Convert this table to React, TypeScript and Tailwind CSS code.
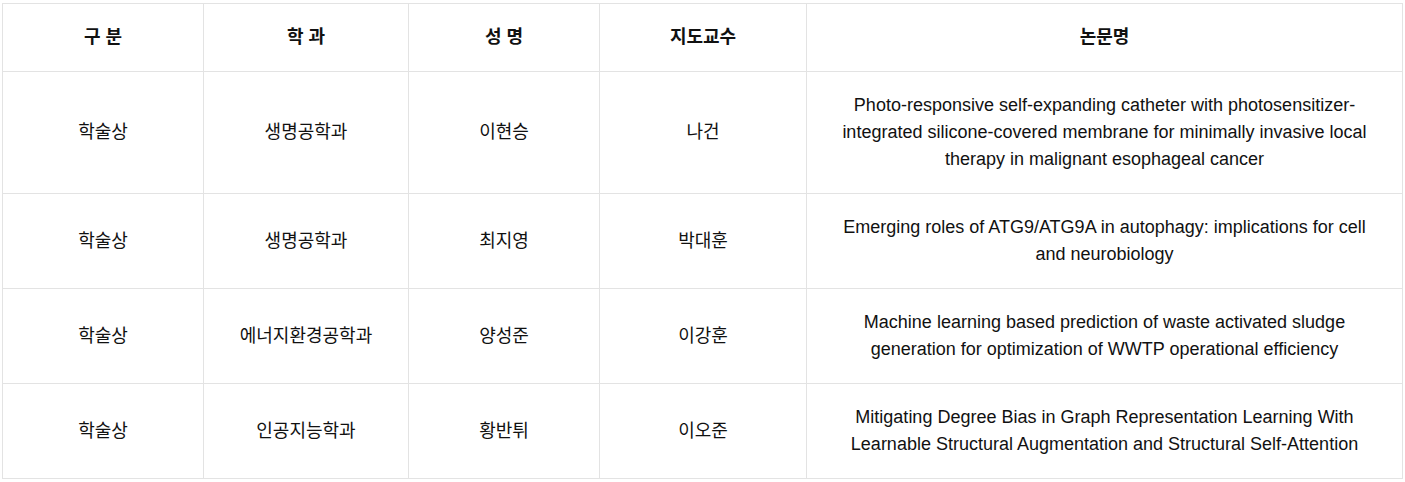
import React from 'react';

const rows = [
  {
    type: '학술상',
    dept: '생명공학과',
    name: '이현승',
    prof: '나건',
    title:
      'Photo-responsive self-expanding catheter with photosensitizer-integrated silicone-covered membrane for minimally invasive local therapy in malignant esophageal cancer',
  },
  {
    type: '학술상',
    dept: '생명공학과',
    name: '최지영',
    prof: '박대훈',
    title: 'Emerging roles of ATG9/ATG9A in autophagy: implications for cell and neurobiology',
  },
  {
    type: '학술상',
    dept: '에너지환경공학과',
    name: '양성준',
    prof: '이강훈',
    title:
      'Machine learning based prediction of waste activated sludge generation for optimization of WWTP operational efficiency',
  },
  {
    type: '학술상',
    dept: '인공지능학과',
    name: '황반튀',
    prof: '이오준',
    title:
      'Mitigating Degree Bias in Graph Representation Learning With Learnable Structural Augmentation and Structural Self-Attention',
  },
];

const headers = ['구 분', '학 과', '성 명', '지도교수', '논문명'];

export default function App() {
  return (
    <div
      className="bg-white pl-[2px] pt-[3px] text-[18px] leading-[27px] text-[#111]"
      style={{ fontFamily: '"Liberation Sans", Arial, "Noto Sans CJK KR", sans-serif' }}
    >
      <table className="w-[1401px] table-fixed border-collapse text-center">
        <colgroup>
          <col className="w-[201px]" />
          <col className="w-[205px]" />
          <col className="w-[191px]" />
          <col className="w-[207px]" />
          <col />
        </colgroup>
        <thead>
          <tr>
            {headers.map((h) => (
              <th key={h} className="border border-[#e3e3e3] py-[20px] font-bold">
                {h}
              </th>
            ))}
          </tr>
        </thead>
        <tbody>
          {rows.map((r, i) => (
            <tr key={i}>
              <td className="border border-[#e3e3e3] py-[20px]">{r.type}</td>
              <td className="border border-[#e3e3e3] py-[20px]">{r.dept}</td>
              <td className="border border-[#e3e3e3] py-[20px]">{r.name}</td>
              <td className="border border-[#e3e3e3] py-[20px]">{r.prof}</td>
              <td className="border border-[#e3e3e3] px-[30px] py-[20px]">{r.title}</td>
            </tr>
          ))}
        </tbody>
      </table>
    </div>
  );
}
